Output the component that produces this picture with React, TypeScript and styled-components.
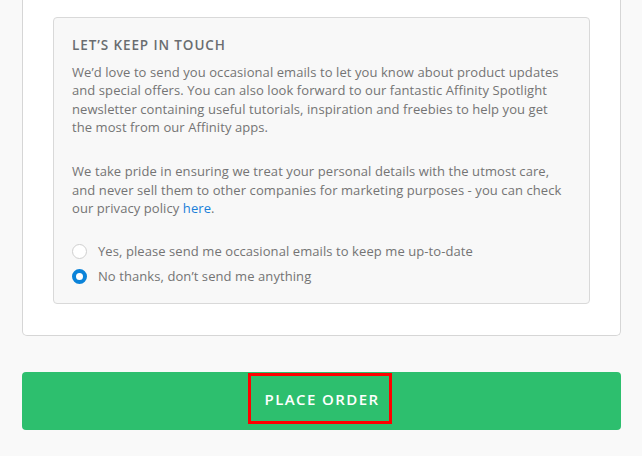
import React, { useState } from 'react';
import styled, { createGlobalStyle } from 'styled-components';

const GlobalStyle = createGlobalStyle`
  html, body {
    margin: 0;
    padding: 0;
    background: #f9f9f9;
  }
  body {
    font-family: 'Open Sans', 'Liberation Sans', sans-serif;
  }
`;

const Page = styled.div`
  padding: 0 21px 0 22px;
  display: flex;
  flex-direction: column;
  gap: 36px;
`;

const Card = styled.section`
  background: #fff;
  border: 1px solid #d6d6d6;
  border-top: none;
  border-radius: 0 0 5px 5px;
  padding: 17px 30px 31px 30px;
`;

const OptIn = styled.div`
  background: #f8f8f8;
  border: 1px solid #d9d9d9;
  border-radius: 4px;
  padding: 18px 19px 16px 18px;
  color: #747474;
  font-size: 13px;
  line-height: 18.6px;
  letter-spacing: 0.08px;
`;

const Heading = styled.h3`
  margin: 0 0 8px;
  font-size: 13.5px;
  font-weight: 600;
  letter-spacing: 0.9px;
  color: #6a6d70;
  text-transform: uppercase;
`;

const Paragraph = styled.p`
  margin: 0 0 25px;
  &:last-of-type {
    margin-bottom: 24px;
  }
`;

const Link = styled.a`
  color: #1a7fd9;
  text-decoration: none;
`;

const Options = styled.div`
  display: flex;
  flex-direction: column;
  gap: 5px;
`;

const Option = styled.label`
  display: flex;
  align-items: center;
  gap: 11px;
  height: 20px;
  cursor: pointer;
`;

const Radio = styled.span<{ $checked: boolean }>`
  box-sizing: border-box;
  width: 15px;
  height: 15px;
  border-radius: 50%;
  flex: none;
  background: #fff;
  border: ${({ $checked }) => ($checked ? '4.5px solid #0b83d9' : '1px solid #cfcfcf')};
`;

const OrderButton = styled.button`
  height: 58px;
  border: none;
  border-radius: 4px;
  background: #2dbf6e;
  display: flex;
  align-items: center;
  justify-content: center;
  cursor: pointer;
  padding: 0;
`;

const Highlight = styled.span`
  box-sizing: border-box;
  width: 144px;
  height: 51px;
  margin-top: -5px;
  margin-left: -4px;
  border: 3px solid #ff0000;
  display: flex;
  align-items: center;
  justify-content: center;
  padding-left: 5px;
  padding-top: 2px;
  color: #fff;
  font-family: 'Open Sans', 'Liberation Sans', sans-serif;
  font-size: 15px;
  font-weight: 600;
  letter-spacing: 1.4px;
`;

const choices = [
  { id: 'yes', label: 'Yes, please send me occasional emails to keep me up-to-date' },
  { id: 'no', label: 'No thanks, don’t send me anything' },
];

export default function App() {
  const [choice, setChoice] = useState('no');

  return (
    <>
      <GlobalStyle />
      <Page>
        <Card>
          <OptIn>
            <Heading>Let’s keep in touch</Heading>
            <Paragraph>
              We’d love to send you occasional emails to let you know about product updates
              and special offers. You can also look forward to our fantastic Affinity Spotlight
              newsletter containing useful tutorials, inspiration and freebies to help you get
              the most from our Affinity apps.
            </Paragraph>
            <Paragraph>
              We take pride in ensuring we treat your personal details with the utmost care,
              and never sell them to other companies for marketing purposes - you can check
              our privacy policy <Link href="#">here</Link>.
            </Paragraph>
            <Options>
              {choices.map((c) => (
                <Option key={c.id} onClick={() => setChoice(c.id)}>
                  <Radio $checked={choice === c.id} />
                  {c.label}
                </Option>
              ))}
            </Options>
          </OptIn>
        </Card>
        <OrderButton type="button">
          <Highlight>PLACE ORDER</Highlight>
        </OrderButton>
      </Page>
    </>
  );
}
